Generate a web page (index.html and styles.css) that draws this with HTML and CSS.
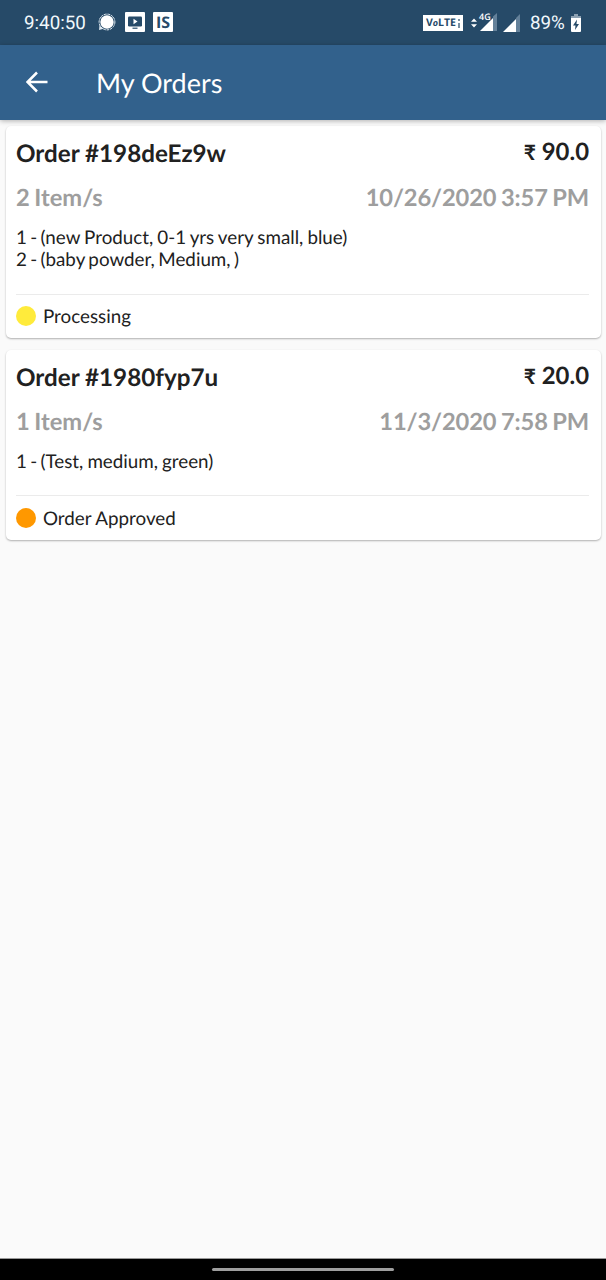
FILE: index.html
```html
<!DOCTYPE html>
<html lang="en">
<head>
<meta charset="utf-8">
<title>My Orders</title>
<link rel="stylesheet" href="styles.css">
</head>
<body>
<div class="screen">
  <div class="status-bar">
    <div class="status-left">
      <span class="clock">9:40:50</span>
      <svg class="signal-app" width="18" height="18" viewBox="0 0 18 18"><circle cx="9" cy="9" r="6.7" fill="#fff"/><circle cx="9" cy="9" r="7.9" fill="none" stroke="#e3edf4" stroke-width="1" stroke-dasharray="2.6 .8"/><path d="M1.5 12.5L1 17l4.500-1.200z" fill="#dce7ef"/></svg>
      <svg class="video-app" width="20" height="20" viewBox="0 0 20 20"><rect width="20" height="20" rx="1" fill="#fff"/><rect x="3" y="4.500" width="14" height="10" rx="1.200" fill="#264a68"/><path d="M8.500 6.800v5.400l4-2.700z" fill="#fff"/><path d="M7.500 16.200h5" stroke="#264a68" stroke-width="1.200"/></svg>
      <span class="is-app">IS</span>
    </div>
    <div class="status-right">
      <span class="volte">V<i>o</i>LTE<b></b></span>
      <svg class="network" width="27" height="26" viewBox="0 -4 27 26"><path d="M0 9.700h6L3 6.500zM0 12.300h6l-3 3.200z" fill="#fff"/><path d="M22 4.500L26 1v18h-4z" fill="#64819a"/><path d="M9 19L22 6v13z" fill="#fff"/><text x="8" y="8.400" class="net-label">4G</text></svg>
      <svg class="network2" width="17" height="18" viewBox="0 0 17 18"><path d="M13 4L17 0v18h-4z" fill="#64819a"/><path d="M0 18L13 5v13z" fill="#fff"/></svg>
      <span class="percent">89%</span>
      <svg class="battery" width="10" height="18" viewBox="0 0 10 18"><path d="M3 0h4v2h3v3H0V2h3z" fill="#8ba0b2"/><path d="M0 4h10v13a1 1 0 0 1-1 1H1a1 1 0 0 1-1-1z" fill="#fff"/><path d="M6 5.500L2 11.500h2.500L4 16l4-6H5.500z" fill="#264a68"/></svg>
    </div>
  </div>
  <header class="app-bar">
    <svg class="back" width="22" height="22" viewBox="0 0 22 22"><path d="M21.500 11H2M11 1.500L1.500 11l9.500 9.500" fill="none" stroke="#fff" stroke-width="2.500"/></svg>
    <h1>My Orders</h1>
  </header>
  <main class="orders">
    <article class="card">
      <div class="row title-row"><h2>Order #198deEz9w</h2><span class="price"><span class="rupee">₹</span> 90.0</span></div>
      <div class="row meta-row"><span>2 Item/s</span><span class="date">10/26/2020 3:57 PM</span></div>
      <div class="items"><p><span class="index">1 - </span>(new Product, 0-1 yrs very small, blue)</p><p class="tight"><span class="index">2 - </span>(baby powder, Medium, )</p></div>
      <div class="state"><span class="dot processing"></span><span>Processing</span></div>
    </article>
    <article class="card">
      <div class="row title-row"><h2>Order #1980fyp7u</h2><span class="price"><span class="rupee">₹</span> 20.0</span></div>
      <div class="row meta-row"><span>1 Item/s</span><span class="date">11/3/2020 7:58 PM</span></div>
      <div class="items"><p><span class="index">1 - </span>(Test, medium, green)</p></div>
      <div class="state"><span class="dot approved"></span><span>Order Approved</span></div>
    </article>
  </main>
  <footer class="nav-bar"><div class="handle"></div></footer>
</div>
</body>
</html>
```
FILE: styles.css
```css
* { box-sizing: border-box; margin: 0; padding: 0; }
body { font-family: Lato, sans-serif; color: #212121; background: #fafafa; text-rendering: geometricPrecision; }
.screen { height: 1280px; display: flex; flex-direction: column; overflow: hidden; }
.status-bar { height: 45px; background: #264a68; display: flex; justify-content: space-between; padding: 0 25px 0 24px; font-family: Roboto, sans-serif; color: #f1f8fc; }
.status-left, .status-right { display: flex; align-items: center; height: 46px; }
.clock { font-size: 18.800px; width: 74px; white-space: nowrap; }
.video-app { margin-left: 9px; }
.signal-app, .video-app, .is-app { margin-bottom: 2px; }
.is-app { margin-left: 8px; width: 20px; height: 20px; background: #fff; color: #264a68; border-radius: 1px; font: 700 16px/20px "Open Sans", sans-serif; text-align: center; }
.volte { width: 40px; height: 16px; background: #fff; color: #264a68; font: 700 10.500px/16px "Open Sans", sans-serif; padding-left: 3px; display: flex; align-items: center; margin-right: 8px; }
.volte i { font-size: 9px; }
.volte b { width: 2px; height: 9px; border-top: 2px solid #7890a2; border-bottom: 5px solid #7890a2; margin-left: 2px; }
.network { margin-bottom: 5px; }
.network2 { margin: 0 10px 0 5px; }
.net-label { font: 600 9px "Open Sans", sans-serif; fill: #fff; }
.percent { font-size: 18.800px; width: 41px; white-space: nowrap; }
.app-bar { height: 75px; background: #32618c; display: flex; align-items: center; padding-left: 26px; position: relative; box-shadow: 0 1px 5px rgba(0,0,0,.3); }
.app-bar .back { margin-bottom: 1px; }
.app-bar h1 { margin-left: 48px; color: #fff; font-size: 27px; font-weight: 400; line-height: 34px; }
.orders { flex: 1; padding: 6px 5px 0 6px; display: flex; flex-direction: column; gap: 12px; }
.card { background: #fff; border-radius: 5px; padding: 13px 12px 0 10px; box-shadow: 0 1px 2px rgba(0,0,0,.3); }
.row { display: flex; justify-content: space-between; height: 30px; line-height: 30px; font-size: 23.900px; font-weight: 700; white-space: nowrap; }
.title-row h2 { font-size: 24.200px; font-weight: 700; }
.price { line-height: 25px; }
.rupee { font-size: 21px; }
.meta-row { margin-top: 14px; color: #9e9e9e; word-spacing: -1.200px; font-size: 23.700px; }
.date { letter-spacing: -.120px; }
.items { margin-top: 14px; padding-bottom: 21.800px; border-bottom: 1px solid #ebebeb; font-size: 18.800px; line-height: 22.400px; word-spacing: -.750px; }
.index { word-spacing: -1.500px; }
.tight { word-spacing: -1.300px; }
.state { height: 43.500px; display: flex; align-items: center; gap: 7px; font-size: 18.800px; }
.dot { width: 20px; height: 20px; border-radius: 50%; }
.processing { background: #ffeb3b; }
.approved { background: #ff9800; }
.nav-bar { height: 22px; background: #000; border-top: 1px solid #999; display: flex; justify-content: center; align-items: center; }
.handle { width: 182px; height: 3px; border-radius: 2px; background: #9e9e9e; }
```
